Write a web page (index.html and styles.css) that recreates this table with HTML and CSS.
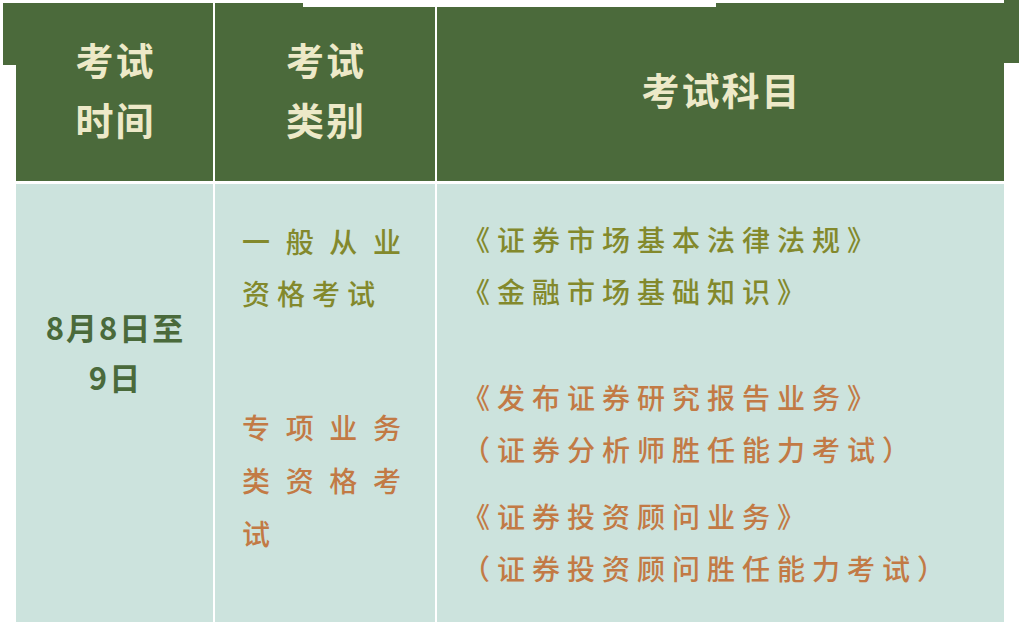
FILE: index.html
```html
<!DOCTYPE html>
<html lang="zh-CN">
<head>
<meta charset="utf-8">
<title>考试安排</title>
<link rel="stylesheet" href="styles.css">
</head>
<body>
<div class="page">
  <div class="table">
    <div class="head head-time"><p>考试<br>时间</p></div>
    <div class="head head-type"><p>考试<br>类别</p></div>
    <div class="head head-subject"><p>考试科目</p></div>

    <div class="cell cell-date"><p>8月8日至<br>9日</p></div>
    <div class="cell cell-type">
      <p class="type general">一般从业资格考试</p>
      <p class="type special">专项业务类资格考试</p>
    </div>
    <div class="cell cell-subject">
      <p class="subj general">《证券市场基本法律法规》<br>《金融市场基础知识》</p>
      <p class="subj special first">《发布证券研究报告业务》<br>（证券分析师胜任能力考试）</p>
      <p class="subj special second">《证券投资顾问业务》<br>（证券投资顾问胜任能力考试）</p>
    </div>
  </div>
</div>
</body>
</html>
```

FILE: styles.css
```css
* { box-sizing: border-box; }
html, body {
  margin: 0;
  padding: 0;
  background: #ffffff;
}
body {
  font-family: "Noto Sans CJK SC", "Noto Sans", sans-serif;
  width: 1019px;
  height: 624px;
  overflow: hidden;
}
p { margin: 0; }

.page {
  padding: 3px 15px 2px 16px;
}

.table {
  display: grid;
  grid-template-columns: 197px 220px 1fr;
  grid-template-rows: 178px 438px;
  column-gap: 2px;
  row-gap: 3px;
}

.head {
  position: relative;
  background: #4b6a3b;
  color: #ede9c8;
  font-weight: 700;
  font-size: 38px;
  line-height: 60px;
  letter-spacing: 2px;
  display: flex;
  align-items: center;
  justify-content: center;
  text-align: center;
}
.head p { padding-left: 2px; padding-bottom: 6px; }

/* decorative tabs of the pasted banner */
.head-time::before {
  content: "";
  position: absolute;
  left: -13px;
  top: 0;
  width: 13px;
  height: 62px;
  background: #4b6a3b;
}
.head-type::before {
  content: "";
  position: absolute;
  left: 88px;
  right: 0;
  top: 0;
  height: 4px;
  background: #ffffff;
}
.head-subject::before {
  content: "";
  position: absolute;
  left: -2px;
  width: 281px;
  top: 0;
  height: 4px;
  background: #ffffff;
}
.head-subject::after {
  content: "";
  position: absolute;
  right: -15px;
  top: -3px;
  width: 15px;
  height: 63px;
  background: #4b6a3b;
}

.cell {
  background: #cce3dd;
}

.cell-date {
  padding-top: 118px;
  text-align: center;
  color: #4a6a3b;
  font-weight: 700;
  font-size: 31px;
  line-height: 50px;
  letter-spacing: 2px;
}
.cell-date p { padding-left: 2px; }

.cell-type {
  padding: 31px 27px 0 27px;
  font-size: 28px;
  line-height: 52px;
  letter-spacing: 7px;
  font-weight: 500;
}
.type { text-align: justify; }
.type.special { margin-top: 82px; line-height: 53px; }

.general { color: #83892c; }
.special { color: #c27a45; }

.cell-subject {
  padding: 29px 0 0 25px;
  font-size: 28px;
  line-height: 52px;
  letter-spacing: 7px;
  font-weight: 500;
}
.subj.first { margin-top: 54px; }
.subj.second { margin-top: 15px; }
```
